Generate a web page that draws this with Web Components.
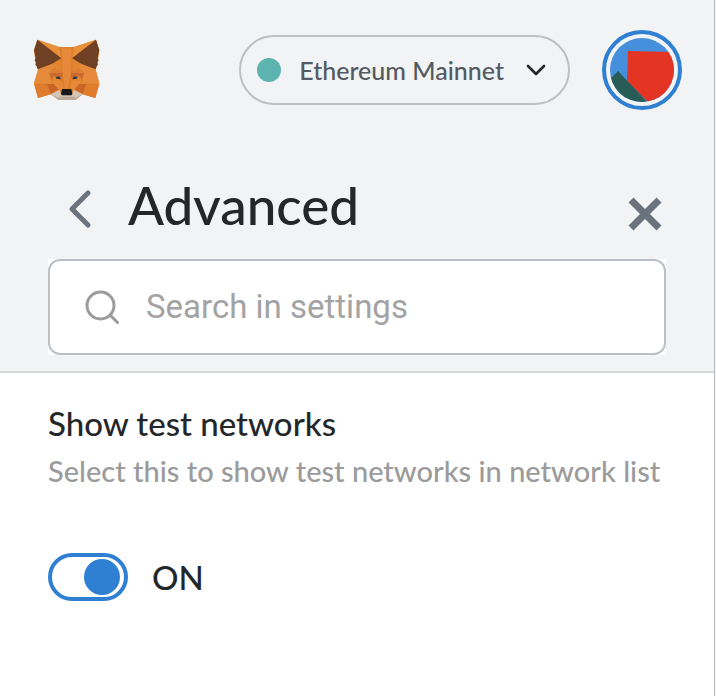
<!DOCTYPE html>
<html lang="en">
<head>
<meta charset="utf-8">
<meta name="viewport" content="width=device-width, initial-scale=1">
<title>Advanced settings</title>
<style>
  html, body { margin: 0; min-height: 100%; }
  html { background: #f2f3f5; }
  body { font-family: Lato, "Liberation Sans", sans-serif; color: #24272a; }
</style>
</head>
<body>
<wallet-page>
  <app-header slot="header">
    <fox-logo></fox-logo>
    <network-picker slot="actions">Ethereum Mainnet</network-picker>
    <account-avatar slot="actions"></account-avatar>
  </app-header>
  <settings-header slot="header">Advanced</settings-header>
  <search-box slot="header" placeholder="Search in settings"></search-box>
  <setting-row>
    <span slot="title">Show test networks</span>
    <span slot="description">Select this to show test networks in network list</span>
    <toggle-switch checked></toggle-switch>
  </setting-row>
</wallet-page>
<script>
const define = (name, html, setup) => customElements.define(name, class extends HTMLElement {
  constructor() {
    super();
    this.attachShadow({ mode: 'open' });
    const t = document.createElement('template');
    t.innerHTML = html;
    this.shadowRoot.append(t.content.cloneNode(true));
  }
  connectedCallback() { if (setup) setup(this, this.shadowRoot); }
});

define('wallet-page', `
<style>
  :host { display: block; box-sizing: border-box; min-height: 100vh; margin-right: 1px; border-right: 1px solid #b9bbbd; background: #fff; }
  header { background: #f2f3f5; border-bottom: 2px solid #d4d6d8; padding-bottom: 16px; }
  main { padding: 30px 48px; }
</style>
<header><slot name="header"></slot></header>
<main><slot></slot></main>`);

define('app-header', `
<style>
  :host { display: flex; align-items: center; justify-content: space-between; padding: 30px 32px; }
  .actions { display: flex; align-items: center; gap: 32px; }
</style>
<slot></slot>
<div class="actions"><slot name="actions"></slot></div>`);

define('fox-logo', `
<style>:host { display: block; } svg { display: block; width: 70px; height: 64px; }</style>
<svg viewBox="24 24 210 192" role="img" aria-label="MetaMask">
  <path fill="#e2852f" d="M40 29 106 51H150L216 29 226 62 221 98 215 119 226 160 214 204 176 193 154 210H104L80 193 42 204 30 160 42 119 35 98 30 62z"/>
  <path fill="#e8903a" d="M40 29 106 51 112 85zM216 29 150 51 144 85z"/>
  <path fill="#de7d2b" d="M106 51H150L144 85 147 128 137 178H119L109 128 112 85z"/>
  <path fill="#e7893a" d="M113 55H143L140 127 132 176H123L116 127z"/>
  <path fill="#704024" d="M40 29 112 85 82 103 41 118 38 109 34 104 36 97 32 91 35 84 30 60zM216 29 144 85 174 103 215 118 218 109 222 104 220 97 224 91 221 84 226 60z"/>
  <path fill="#e58a38" d="M42 119 82 103 91 113 76 128 81 161H30zM215 119 174 103 165 113 180 128 175 161H226z"/>
  <path fill="#ca6a31" d="M91 114 76 130 82 150 89 137 112 150 116 129zM165 114 180 130 174 150 167 137 144 150 140 129z"/>
  <path fill="#df7e31" d="M91 114 76 130 116 128zM165 114 180 130 140 128z"/>
  <path fill="#df7b2b" d="M30 161H69L80 193 42 204zM226 161H187L176 193 214 204z"/>
  <path fill="#cb6527" d="M69 162H90L104 178 80 193zM187 162H166L152 178 176 193z"/>
  <path fill="#e68a38" d="M84 153 111 152 119 176 108 179 93 166zM172 153 145 152 137 176 148 179 163 166z"/>
  <path fill="#b9a998" d="M80 193 108 186 116 195H140L148 186 176 193 153 210H104z"/>
  <path fill="#d5c4b6" d="M80 193 107 179 111 196H145L149 179 176 193 155 204 150 200H106L101 204z"/>
  <path fill="#263846" d="M95 142 106 139 110 148 98 146zM161 142 150 139 146 148 158 146z"/>
  <path fill="#161718" d="M114 177H142L145 192 142 196H114L111 192z"/>
</svg>`);

define('network-picker', `
<style>
  :host { display: block; }
  button { display: flex; align-items: center; height: 70px; padding: 0 22px 0 16px; border: 2px solid #bbc0c5; border-radius: 35px; background: none; font: inherit; font-size: 25px; font-weight: 500; color: #535a61; cursor: pointer; }
  .dot { width: 24px; height: 24px; border-radius: 50%; background: #5cb3b0; margin-right: 18px; }
  svg { width: 20px; height: 12px; margin-left: 22px; }
</style>
<button type="button"><span class="dot"></span><slot></slot>
<svg viewBox="0 0 20 12" fill="none" stroke="#24272a" stroke-width="2.6" stroke-linecap="round" stroke-linejoin="round"><path d="M2 2 10 10 18 2"/></svg></button>`);

define('account-avatar', `
<style>
  :host { display: block; }
  button { display: block; box-sizing: border-box; width: 80px; height: 80px; padding: 4px; border: 4px solid #2f7fd2; border-radius: 50%; background: none; cursor: pointer; }
  svg { display: block; width: 64px; height: 64px; border-radius: 50%; }
</style>
<button type="button" aria-label="My account">
  <svg viewBox="0 0 64 64"><path fill="#458fdc" d="M0 0H64V64H0z"/><path fill="#e43424" d="M18 13 64 14V64H38L17 43z"/><path fill="#285c57" d="M-6 47 8 33 41 68H-6z"/></svg>
</button>`);

define('settings-header', `
<style>
  :host { display: flex; align-items: flex-end; margin: 39px 52px 28px 68px; }
  button { display: block; border: 0; padding: 0; background: none; color: #6a737d; cursor: pointer; }
  svg { display: block; }
  h1 { flex: 1; margin: 0 0 0 36px; font-size: 53px; line-height: 52px; font-weight: 500; }
</style>
<button type="button" aria-label="Back"><svg width="24" height="44" viewBox="0 0 24 44" fill="none" stroke="currentColor" stroke-width="5" stroke-linecap="round" stroke-linejoin="round"><path d="M20 6 4 22 20 38"/></svg></button>
<h1><slot></slot></h1>
<button type="button" aria-label="Close"><svg width="34" height="34" viewBox="0 0 34 34" fill="none" stroke="currentColor" stroke-width="7"><path d="M3 3 31 31M31 3 3 31"/></svg></button>`);

define('search-box', `
<style>
  :host { display: block; margin: 0 48px; background: #fff; }
  label { display: flex; align-items: center; box-sizing: border-box; height: 96px; padding: 0 34px; gap: 26px; border: 2px solid #bbc0c5; border-radius: 12px; }
  svg { flex: none; width: 36px; height: 36px; }
  input { flex: 1; min-width: 0; border: 0; padding: 0; outline: 0; background: none; font-family: Roboto, sans-serif; font-size: 33px; line-height: 40px; color: #24272a; }
  input::placeholder { color: #a3a3a3; opacity: 1; }
</style>
<label>
  <svg viewBox="0 0 36 36" fill="none" stroke="#9b9b9b" stroke-width="3" stroke-linecap="round"><circle cx="16.500" cy="16.500" r="13.500"/><path d="M26.500 26.500 33.500 33.500"/></svg>
  <input type="text" aria-label="Search in settings">
</label>`, (el, root) => { root.querySelector('input').placeholder = el.getAttribute('placeholder'); });

define('setting-row', `
<style>
  :host { display: block; }
  h2 { margin: 0 0 10px; font-size: 33px; line-height: 40px; font-weight: 500; }
  p { margin: 0 0 64px; font-size: 29px; line-height: 36px; font-weight: 500; color: #9b9b9b; }
</style>
<h2><slot name="title"></slot></h2>
<p><slot name="description"></slot></p>
<slot></slot>`);

define('toggle-switch', `
<style>
  :host { display: block; }
  label { display: inline-flex; align-items: center; gap: 24px; font-size: 33px; line-height: 48px; font-weight: 500; cursor: pointer; }
  input { appearance: none; box-sizing: border-box; display: flex; align-items: center; width: 80px; height: 48px; margin: 0; padding: 0 4px; border: 4px solid #2f7fd2; border-radius: 24px; background: #fff; cursor: pointer; }
  input::before { content: ""; width: 36px; height: 36px; border-radius: 50%; background: #2f7fd2; }
  input:checked { justify-content: flex-end; }
</style>
<label><input type="checkbox" role="switch"><span></span></label>`, (el, root) => {
  const input = root.querySelector('input'), text = root.querySelector('span');
  const show = () => { text.textContent = input.checked ? 'ON' : 'OFF'; };
  input.checked = el.hasAttribute('checked');
  input.addEventListener('change', show);
  show();
});
</script>
</body>
</html>
